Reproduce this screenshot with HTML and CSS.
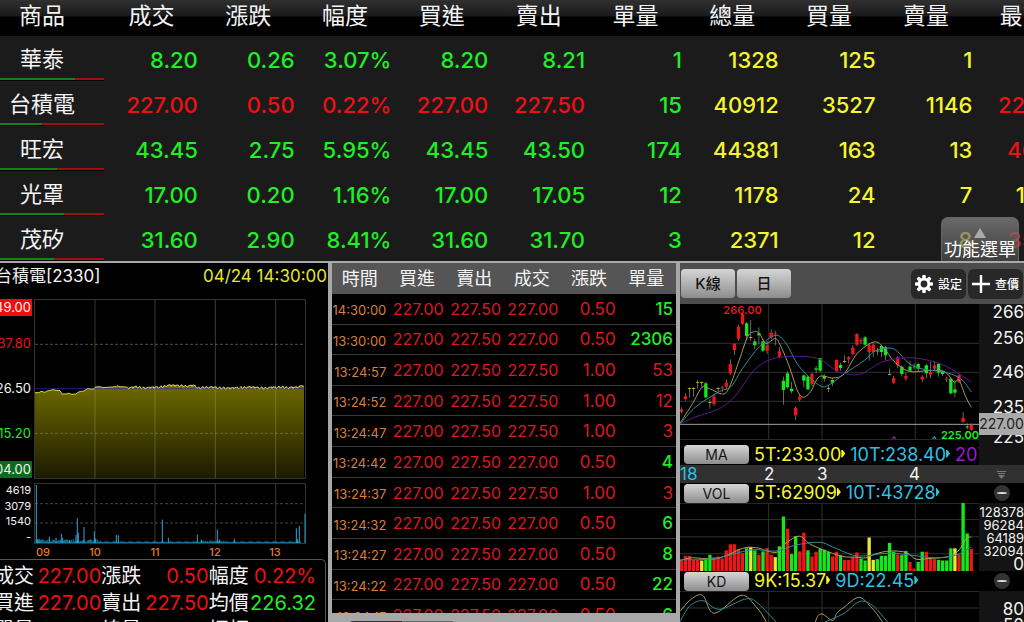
FILE: index.html
```html
<!DOCTYPE html>
<html lang="zh-Hant">
<head>
<meta charset="utf-8">
<meta name="viewport" content="width=device-width, initial-scale=1">
<title>看盤</title>
<link rel="stylesheet" href="styles.css">
</head>
<body>
<section class="quotes">
  <table class="quote-table">
    <colgroup><col class="col-name"><col><col><col><col><col><col><col><col><col><col></colgroup>
    <thead>
      <tr><th class="name">商品</th><th>成交</th><th>漲跌</th><th>幅度</th><th>買進</th><th>賣出</th><th>單量</th><th>總量</th><th>買量</th><th>賣量</th><th>最高</th></tr>
    </thead>
    <tbody>
      <tr class="down"><td class="name">華泰<span class="ratio"><i style="width:72%"></i></span></td><td>8.20</td><td>0.26</td><td>3.07%</td><td>8.20</td><td>8.21</td><td class="g">1</td><td class="y">1328</td><td class="y">125</td><td class="y">1</td><td class="r">8.51</td></tr>
      <tr class="up"><td class="name">台積電<span class="ratio"><i style="width:40%"></i></span></td><td>227.00</td><td>0.50</td><td>0.22%</td><td>227.00</td><td>227.50</td><td class="g">15</td><td class="y">40912</td><td class="y">3527</td><td class="y">1146</td><td class="r">227.50</td></tr>
      <tr class="down"><td class="name">旺宏<span class="ratio"><i style="width:55%"></i></span></td><td>43.45</td><td>2.75</td><td>5.95%</td><td>43.45</td><td>43.50</td><td class="g">174</td><td class="y">44381</td><td class="y">163</td><td class="y">13</td><td class="r">46.80</td></tr>
      <tr class="down"><td class="name">光罩<span class="ratio"><i style="width:62%"></i></span></td><td>17.00</td><td>0.20</td><td>1.16%</td><td>17.00</td><td>17.05</td><td class="g">12</td><td class="y">1178</td><td class="y">24</td><td class="y">7</td><td class="y">17.20</td></tr>
      <tr class="down"><td class="name">茂矽<span class="ratio"><i style="width:52%"></i></span></td><td>31.60</td><td>2.90</td><td>8.41%</td><td>31.60</td><td>31.70</td><td class="g">3</td><td class="y">2371</td><td class="y">12</td><td class="y">8</td><td class="r">35.00</td></tr>
    </tbody>
  </table>
  <button class="menu-tab" type="button">
    <svg width="12" height="10" viewBox="0 0 12 10" aria-hidden="true"><path d="M6 0 12 10H0z" fill="#aaa"/></svg>
    <span>功能選單</span>
  </button>
</section>

<main class="panels">
  <section class="intraday">
    <header class="intraday-head"><h2>台積電[2330]</h2><time>04/24 14:30:00</time></header>
    <div class="intraday-chart">
      <div class="price-axis"><span class="limit-up">249.00</span><span class="r">237.80</span><span>226.50</span><span class="g">215.20</span><span class="limit-down">204.00</span></div>
      <svg class="plot" id="intraday-price" viewBox="102 117 816 540" preserveAspectRatio="none"></svg>
      <div class="volume-axis"><span>4619</span><span>3079</span><span>1540</span><span>-</span></div>
      <svg class="plot" id="intraday-volume" viewBox="102 130 816 183" preserveAspectRatio="none"></svg>
      <div class="hours"><span>09</span><span>10</span><span>11</span><span>12</span><span>13</span></div>
    </div>
    <dl class="details">
      <div><dt>成交</dt><dd class="r">227.00</dd></div>
      <div><dt>漲跌</dt><dd class="r">0.50</dd></div>
      <div><dt>幅度</dt><dd class="r">0.22%</dd></div>
      <div><dt>買進</dt><dd class="r">227.00</dd></div>
      <div><dt>賣出</dt><dd class="r">227.50</dd></div>
      <div><dt>均價</dt><dd class="g">226.32</dd></div>
      <div><dt>單量</dt><dd class="g">15</dd></div>
      <div><dt>總量</dt><dd class="y">40912</dd></div>
      <div><dt>振幅</dt><dd></dd></div>
    </dl>
  </section>

  <section class="ticks">
    <div class="ticks-view">
      <table class="tick-table">
        <thead><tr><th>時間</th><th>買進</th><th>賣出</th><th>成交</th><th>漲跌</th><th>單量</th></tr></thead>
        <tbody>
          <tr><td>14:30:00</td><td>227.00</td><td>227.50</td><td>227.00</td><td>0.50</td><td class="g">15</td></tr>
          <tr><td>13:30:00</td><td>227.00</td><td>227.50</td><td>227.00</td><td>0.50</td><td class="g">2306</td></tr>
          <tr><td>13:24:57</td><td>227.00</td><td>227.50</td><td>227.50</td><td>1.00</td><td>53</td></tr>
          <tr><td>13:24:52</td><td>227.00</td><td>227.50</td><td>227.50</td><td>1.00</td><td>12</td></tr>
          <tr><td>13:24:47</td><td>227.00</td><td>227.50</td><td>227.50</td><td>1.00</td><td>3</td></tr>
          <tr><td>13:24:42</td><td>227.00</td><td>227.50</td><td>227.00</td><td>0.50</td><td class="g">4</td></tr>
          <tr><td>13:24:37</td><td>227.00</td><td>227.50</td><td>227.50</td><td>1.00</td><td>3</td></tr>
          <tr><td>13:24:32</td><td>227.00</td><td>227.50</td><td>227.00</td><td>0.50</td><td class="g">6</td></tr>
          <tr><td>13:24:27</td><td>227.00</td><td>227.50</td><td>227.00</td><td>0.50</td><td class="g">8</td></tr>
          <tr><td>13:24:22</td><td>227.00</td><td>227.50</td><td>227.00</td><td>0.50</td><td class="g">22</td></tr>
          <tr><td>13:24:17</td><td>227.00</td><td>227.50</td><td>227.00</td><td>0.50</td><td class="g">6</td></tr>
        </tbody>
      </table>
    </div>
    <div class="tick-tabs"><i></i><i></i></div>
  </section>

  <section class="kline">
    <header class="toolbar">
      <button class="silver" type="button">K線</button>
      <button class="silver" type="button">日</button>
      <button class="dark push" type="button">
        <svg width="18" height="18" viewBox="-9 -9 18 18" aria-hidden="true"><g fill="#fff"><g id="teeth"><rect x="-1.8" y="-9" width="3.6" height="18" rx="1"/><rect x="-9" y="-1.8" width="18" height="3.6" rx="1"/></g><use href="#teeth" transform="rotate(45)"/><circle r="6.3"/></g><circle r="3.4" fill="#282828"/></svg>
        <span>設定</span>
      </button>
      <button class="dark" type="button">
        <svg width="18" height="18" viewBox="0 0 18 18" aria-hidden="true"><path d="M9 0v18M0 9h18" stroke="#fff" stroke-width="2.4"/></svg>
        <span>查價</span>
      </button>
    </header>

    <div class="pane candle-pane">
      <div class="plot-box">
        <svg class="plot" id="candles" viewBox="12 12 897 408" preserveAspectRatio="none"></svg>
        <span class="high">266.00</span><span class="low">225.00</span>
      </div>
      <div class="axis"><span>266</span><span>256</span><span>246</span><span>235</span><span>225</span><output>227.00</output></div>
    </div>
    <div class="indicator tall">
      <div class="values"><button class="silver pill" type="button">MA</button><span class="y">5T:233.00<i class="flag"></i></span><span class="c">10T:238.40<i class="flag"></i></span><span class="p">20T:243.10</span></div>
      <div class="side"></div>
    </div>
    <div class="months">
      <div class="month-row"><span class="c">18</span><span>2</span><span>3</span><span>4</span></div>
      <div class="side"><svg width="9" height="8" viewBox="0 0 9 8" aria-hidden="true"><path d="M0 .5h9M1 2.5h7" stroke="#777"/><path d="M1 4h7L4.500 8z" fill="#777"/></svg></div>
    </div>
    <div class="indicator">
      <div class="values"><button class="silver pill" type="button">VOL</button><span class="y">5T:62909<i class="flag"></i></span><span class="c">10T:43728<i class="flag"></i></span></div>
      <button class="minus" type="button" aria-label="收合"></button>
    </div>
    <div class="pane volume-pane">
      <svg class="plot" id="volume" viewBox="12 192 897 201" preserveAspectRatio="none"></svg>
      <div class="axis"><span>128378</span><span>96284</span><span>64189</span><span>32094</span><span class="zero">0</span></div>
    </div>
    <div class="indicator">
      <div class="values"><button class="silver pill" type="button">KD</button><span class="y">9K:15.37<i class="flag"></i></span><span class="c">9D:22.45<i class="flag"></i></span></div>
      <button class="minus" type="button" aria-label="收合"></button>
    </div>
    <div class="pane kd-pane">
      <svg class="plot" id="kd" viewBox="12 453 897 240" preserveAspectRatio="none"></svg>
      <div class="axis"><span>80</span><span>50</span><span>20</span></div>
    </div>
  </section>
</main>
<script src="script.js"></script>
</body>
</html>
```

FILE: styles.css
```css
* { box-sizing: border-box; }

body {
  margin: 0;
  height: 100vh;
  display: flex;
  flex-direction: column;
  overflow: hidden;
  background: #000;
  color: #f4f4f4;
  font-family: Inter, "Noto Sans CJK TC", sans-serif;
}

button { font: inherit; border: 0; padding: 0; cursor: pointer; }
table { border-collapse: collapse; table-layout: fixed; }
h2, dl, dd { margin: 0; font-weight: 400; }

.g { color: #1fef25; }
.r { color: #ee1015; }
.y { color: #f5f52e; }
.c { color: #2cc0e4; }
.p { color: #9a18d8; }

/* Quote list */
.quotes { position: relative; overflow: hidden; background: #1b1b1b; flex: none; }
.quote-table { width: 1072px; min-width: 104.7%; }
.col-name { width: 104px; }
.quote-table thead tr {
  height: 36px;
  background: linear-gradient(#303030, #1a1a1a 16px, #000 17px);
}
.quote-table th { padding: 0 2px 5px 0; font-size: 23px; line-height: 30px; font-weight: 400; }
.quote-table td {
  height: 45px;
  padding: 3px 3px 0 0;
  font-size: 22px;
  line-height: 30px;
  font-weight: 500;
  text-align: right;
}
.quote-table .name { padding-right: 20px; text-align: center; font-weight: 400; }
.quote-table td.name { position: relative; padding-bottom: 2px; }
.down { color: #1fef25; }
.up { color: #ee1015; }
td.name { color: #f4f4f4; }
.ratio {
  position: absolute;
  left: 0;
  right: 0;
  bottom: 1px;
  height: 2px;
  background: #a00f10;
  box-shadow: 0 1px #000;
}
.ratio i { display: block; height: 2px; background: #16801a; }
.menu-tab {
  position: absolute;
  right: 5px;
  bottom: 0;
  width: 78px;
  height: 44px;
  display: flex;
  flex-direction: column;
  align-items: center;
  justify-content: flex-end;
  border: 1px solid #666;
  border-bottom: 0;
  border-radius: 7px 7px 0 0;
  background: linear-gradient(rgba(125, 125, 125, .8), rgba(85, 85, 85, .6));
  color: #fff;
  font-size: 18px;
  line-height: 23px;
  white-space: nowrap;
}

/* Lower panels */
.panels {
  flex: 1;
  min-height: 0;
  display: grid;
  grid-template-columns: 328fr 352fr 344fr;
  border-top: 2px solid #a8a8a8;
  overflow: hidden;
}
.panels > * { min-width: 0; min-height: 0; overflow: hidden; }
.plot { display: block; width: 100%; height: 100%; min-height: 0; }

/* Intraday */
.intraday-head {
  display: flex;
  justify-content: space-between;
  height: 36px;
  margin-left: -5px;
  padding-right: 1px;
  font-size: 17px;
  line-height: 26px;
  white-space: nowrap;
}
.intraday-head h2 { font-size: 17px; }
.intraday-head time { color: #e5e52e; }
.intraday-chart {
  display: grid;
  grid-template-columns: 34px 1fr;
  grid-template-rows: 180px 61px 11px;
  row-gap: 4px;
  margin-right: 22px;
}
.price-axis {
  display: grid;
  grid-template-rows: 22px 45px 45px 45px 22px;
  align-items: center;
  justify-content: end;
  font-size: 13px;
  line-height: 17px;
}
.price-axis span { padding: 0 1px 0 4px; margin-right: 2px; text-align: right; }
.price-axis .limit-up { background: #f20d0d; align-self: start; }
.price-axis .limit-down { background: #0e6a1e; align-self: end; }
.volume-axis {
  display: flex;
  flex-direction: column;
  justify-content: space-between;
  padding-right: 3px;
  font-size: 11px;
  line-height: 14px;
  text-align: right;
}
.hours {
  grid-column: 2;
  display: grid;
  grid-template-columns: 31fr 60fr 60fr 60fr 60fr 1fr;
  margin-top: -2px;
  font-size: 11px;
  line-height: 13px;
  font-weight: 500;
  text-align: center;
  color: #e67a2c;
}
.hours span:first-child { text-align: left; padding-left: 2px; }
.details {
  display: grid;
  grid-template-columns: 1fr 1fr 1fr;
  grid-auto-rows: 27px;
  width: 332px;
  min-width: calc(100% + 4px);
  margin-left: -6px;
  padding: 2px 9px 0 0;
  border: solid #555;
  border-width: 1px 1px 0 0;
  border-radius: 0 5px 0 0;
  font-size: 20px;
  line-height: 29px;
}
.details div { display: flex; justify-content: space-between; white-space: nowrap; }

/* Ticks */
.ticks { display: flex; flex-direction: column; padding: 0 4px; background: #a8a8a8; }
.ticks-view { flex: 1; min-height: 0; overflow: hidden; background: #000; }
.tick-table { width: 100%; height: 368px; color: #dc1820; }
.tick-table th {
  height: 31px;
  padding: 0 2px 0 0;
  background: #555;
  color: #f4f4f4;
  font-size: 18px;
  line-height: 26px;
  font-weight: 400;
}
.tick-table td {
  padding: 0 3px 0 0;
  border-bottom: 1px solid #3a3a3a;
  font-size: 16px;
  line-height: 22px;
  text-align: right;
}
.tick-table td:first-child { padding-top: 3px; font-size: 13px; color: #d87f38; }
.tick-table td:nth-child(n+5) { font-size: 17px; }
.tick-table .g { font-weight: 500; }
.tick-tabs { flex: none; display: flex; height: 9px; padding: 8px 0 0 17px; overflow: hidden; }
.tick-tabs i { width: 53px; height: 20px; border-radius: 4px 0 0 4px; background: #333; }
.tick-tabs i + i { border-radius: 0 4px 4px 0; background: #666; }

/* K line */
.toolbar {
  display: flex;
  align-items: center;
  gap: 2px;
  height: 41px;
  padding: 0 1px;
  background: #4d4d4d;
}
.silver {
  width: 54px;
  height: 29px;
  border-radius: 4px;
  background: linear-gradient(#d6d6d6, #8d8d8d);
  color: #151515;
  font-size: 15px;
  line-height: 28px;
  font-weight: 500;
}
.dark {
  display: flex;
  align-items: center;
  justify-content: center;
  gap: 5px;
  width: 55px;
  height: 30px;
  border-radius: 6px;
  background: #282828;
  color: #fff;
  font-size: 12px;
  font-weight: 500;
  white-space: nowrap;
}
.push { margin-left: auto; }
.pane, .indicator, .months { display: grid; grid-template-columns: 1fr 45px; }
.pane { grid-template-rows: minmax(0, 1fr); }
.pane > *, .indicator > * { min-width: 0; }
.axis {
  display: grid;
  background: #141414;
  text-align: right;
}
.candle-pane { height: 136px; }
.plot-box { position: relative; min-height: 0; }
.high, .low { position: absolute; font-size: 11px; line-height: 12px; font-weight: 600; }
.high { left: 14.5%; top: 0; color: #dd1a20; }
.low { right: 0; bottom: -1px; color: #1fef25; }
.candle-pane .axis {
  position: relative;
  grid-template-rows: 16px 35px 34px 35px 25px;
  align-items: center;
  font-size: 17px;
  line-height: 18px;
}
.axis output {
  position: absolute;
  left: 0;
  right: 0;
  top: 109px;
  background: #a9a9a9;
  color: #222;
  font-size: 14px;
  line-height: 22px;
  text-align: center;
}
.indicator { height: 20px; background: #000; }
.indicator.tall { height: 25px; padding-top: 4px; }
.tall .side { margin-top: -4px; }
.side { background: #141414; }
.values {
  display: flex;
  align-items: center;
  gap: 5px;
  overflow: hidden;
  padding-left: 4px;
  font-size: 18px;
  line-height: 20px;
  white-space: nowrap;
}
.pill {
  flex: none;
  width: 65px;
  height: 19px;
  font-size: 14px;
  line-height: 19px;
  font-weight: 400;
}
.flag {
  display: inline-block;
  width: 4px;
  height: 8px;
  margin-bottom: 3px;
  background: currentColor;
  clip-path: polygon(0 0, 1px 0, 4px 50%, 1px 100%, 0 100%);
}
.months { height: 18px; background: #303030; }
.month-row {
  display: grid;
  grid-template-columns: 62fr 53fr 53fr 131fr;
  font-size: 17px;
  line-height: 19px;
}
.month-row span:nth-child(2) { padding-left: 22px; }
.month-row span:nth-child(3) { padding-left: 22px; }
.month-row span:nth-child(4) { padding-left: 61px; }
.months .side { display: flex; align-items: center; justify-content: center; background: none; }
.minus {
  place-self: center;
  width: 16px;
  height: 16px;
  border: 3px solid #333;
  border-width: 7px 3px;
  border-radius: 8px;
  background: #ddd;
}
.volume-pane { height: 68px; }
.volume-pane .axis {
  grid-template-rows: repeat(5, 13px);
  padding-top: 2px;
  font-size: 13px;
  line-height: 14px;
  justify-content: end;
}
.volume-pane .zero { font-size: 17px; }
.kd-pane { height: 80px; }
.kd-pane .axis { grid-template-rows: repeat(3, 16px); padding-top: 9px; font-size: 17px; line-height: 18px; }
```

FILE: script.js
```js
const NS = 'http://www.w3.org/2000/svg';
const COLORS = { r: '#f3141a', g: '#13e81a', y: '#e9e834' };

function add(svg, tag, attrs) {
  const node = document.createElementNS(NS, tag);
  for (const key in attrs) node.setAttribute(key, attrs[key]);
  svg.appendChild(node);
  return node;
}

function line(svg, x1, y1, x2, y2, stroke, dash) {
  add(svg, 'path', {
    d: `M${x1} ${y1}L${x2} ${y2}`, stroke, 'stroke-dasharray': dash || 'none',
    'vector-effect': 'non-scaling-stroke', fill: 'none'
  });
}

function curve(svg, points, stroke) {
  const p = points.split(' ').map(s => s.split(',').map(Number));
  let d = `M${p[0]}`;
  for (let i = 0; i < p.length - 1; i++) {
    const a = p[Math.max(i - 1, 0)], b = p[i], c = p[i + 1], e = p[Math.min(i + 2, p.length - 1)];
    d += `C${b[0] + (c[0] - a[0]) / 6},${b[1] + (c[1] - a[1]) / 6} ${c[0] - (e[0] - b[0]) / 6},${c[1] - (e[1] - b[1]) / 6} ${c}`;
  }
  add(svg, 'path', { d, stroke, fill: 'none', 'vector-effect': 'non-scaling-stroke' });
}

/* Intraday price */
const price = document.getElementById('intraday-price');
price.innerHTML = '<defs><linearGradient id="fill" x1="0" y1="0" x2="0" y2="1"><stop offset="0" stop-color="#6e6a00"/><stop offset="1" stop-color="#1c1b00"/></linearGradient></defs>';
const anchors = [[105, 398], [118, 398], [122, 394], [136, 397], [141, 393], [160, 389], [168, 391], [180, 392], [186, 402], [200, 402], [206, 399], [214, 403], [228, 402], [235, 396], [252, 393], [262, 386], [280, 388], [286, 381], [300, 380], [308, 383], [348, 380], [352, 376], [356, 380], [380, 381], [388, 384], [410, 380], [432, 384], [470, 382], [490, 379], [500, 376], [570, 378], [580, 376], [596, 384], [620, 381], [690, 385], [740, 381], [790, 384], [840, 381], [885, 383], [902, 377], [914, 379]];
let trace = '';
for (let i = 0, x = 105; x <= 914; x += 3) {
  while (i < anchors.length - 2 && anchors[i + 1][0] < x) i++;
  const [ax, ay] = anchors[i], [bx, by] = anchors[i + 1];
  const jitter = x > 380 && x < 895 ? [0, -3, 3, 3, -2][(x * 7 + (x >> 4)) % 5] : 0;
  trace += `${trace ? 'L' : 'M'}${x} ${ay + (by - ay) * (x - ax) / (bx - ax) + jitter}`;
}
add(price, 'path', { d: `${trace}V654H105Z`, fill: 'url(#fill)' });
line(price, 105, 386, 917, 386, 'rgba(40,40,190,.7)');
[253, 520].forEach(y => line(price, 105, y, 917, y, 'rgba(140,140,120,.55)', '3 2'));
[285, 465, 646, 827].forEach(x => line(price, x, 118, x, 656, 'rgba(170,170,130,.35)'));
add(price, 'rect', { x: 103.5, y: 118.5, width: 813, height: 537, fill: 'none', stroke: '#333', 'stroke-width': 3 });
add(price, 'path', { d: trace, fill: 'none', stroke: '#d3d03a', 'vector-effect': 'non-scaling-stroke' });

/* Intraday volume */
const vol = document.getElementById('intraday-volume');
[192, 250].forEach(y => line(vol, 105, y, 917, y, '#444', '3 2'));
[285, 465, 646, 827].forEach(x => line(vol, x, 131, x, 312, '#3a3a3a'));
add(vol, 'rect', { x: 103.5, y: 131.5, width: 813, height: 180, fill: 'none', stroke: '#333', 'stroke-width': 3 });
for (let x = 107; x < 900; x += 3) {
  const busy = x < 300 ? 9 : x > 600 && x < 670 ? 6 : 3;
  const h = 3 + (x * 13 + (x >> 3) * 5) % busy;
  add(vol, 'rect', { x, y: 310 - h, width: 3, height: h, fill: '#1e8fc0' });
}
[[109, 136], [113, 298], [117, 297], [148, 291], [168, 294], [184, 282], [188, 294], [208, 300], [228, 286], [232, 235], [235, 279], [252, 262], [283, 275], [286, 296], [349, 286], [355, 287], [487, 240], [505, 294], [592, 285], [604, 300], [652, 270], [658, 299], [703, 297], [889, 266], [892, 298], [898, 259], [915, 222]]
  .forEach(([x, y]) => add(vol, 'rect', { x: x - 1.5, y, width: 3, height: 310 - y, fill: '#2ba3d6' }));

/* Shared K line grid */
function grid(svg, rows, top, bottom) {
  rows.forEach(y => line(svg, 12, y, 909, y, '#303030'));
  [278, 438, 718].forEach(x => line(svg, x, top, x, bottom, '#303030'));
}

/* side, body top, body bottom, wick top, wick bottom */
const candleData = 'r 328 336 322 340|r 289 297 280 302|y 265 267 262 292|y 265 267 262 290|y 247 249 240 265|y 247 249 244 262|g 250 292 246 296|y 307 309 298 326|r 289 312 280 318|y 265 267 260 280|r 262 265 258 276|r 248 260 238 268|r 192 220 178 224|r 132 150 130 165|r 80 116 74 122|r 42 72 40 74|g 70 108 66 122|y 112 114 60 122|g 124 136 116 148|g 100 106 82 134|g 124 152 118 156|r 136 152 122 162|r 98 112 88 118|r 100 103 92 136|r 154 170 142 172|g 242 270 230 314|g 220 262 214 266|g 266 274 246 280|r 324 346 320 360|r 291 299 284 304|g 226 242 224 262|g 230 268 228 270|r 222 252 218 258|g 205 209 198 220|g 175 212 173 216|g 228 236 222 244|y 265 267 256 276|g 240 248 234 258|r 180 214 178 216|g 195 204 188 212|y 184 186 166 188|r 172 178 168 190|r 143 162 136 166|r 102 134 100 138|r 120 124 114 132|g 112 134 108 138|r 136 156 132 182|r 134 156 130 170|y 152 154 144 166|g 138 156 134 172|g 142 166 138 182|y 222 224 206 226|r 234 248 228 252|r 172 196 168 204|g 200 222 196 230|r 228 236 216 242|g 200 212 182 216|r 200 203 190 208|g 192 206 188 214|r 230 238 226 246|g 196 220 192 234|r 216 224 186 234|r 196 206 184 210|g 192 218 188 230|g 214 222 212 228|r 236 239 230 246|g 236 280 232 284|g 268 278 240 292|r 226 246 222 250|r 354 366 336 368|y 380 382 370 388|r 374 390 370 392';
const STEP = 12.25;
const candles = document.getElementById('candles');
grid(candles, [130, 217, 304, 419], 12, 420);
line(candles, 12, 373, 909, 373, '#a0a0a0');
candleData.split('|').forEach((row, i) => {
  const [side, top, bottom, high, low] = row.split(' ');
  const x = 16 + i * STEP;
  add(candles, 'rect', { x: x - 1, y: high, width: 2, height: low - high, fill: '#999' });
  add(candles, 'rect', { x: x - 5, y: top, width: 10, height: bottom - top, fill: COLORS[side] });
});
curve(candles, '12,370 50,310 78,262 100,266 140,282 160,262 190,180 215,110 235,95 250,100 270,130 298,116 315,140 340,200 371,285 400,280 430,230 470,234 504,222 544,160 594,126 624,144 654,184 699,214 754,212 804,214 834,246 849,240 869,290 886,322', '#a89a58');
curve(candles, '12,372 60,320 130,275 165,260 200,205 250,140 298,106 330,130 370,200 430,256 460,254 504,222 564,182 599,152 639,144 664,154 699,190 744,208 804,216 854,236 886,276', '#348a98');
curve(candles, '12,372 60,350 130,326 180,285 240,205 310,172 420,174 480,212 504,220 554,222 624,184 714,174 804,196 886,246', '#5c1a8e');
add(candles, 'path', { d: 'M649 416l5-5 5 5', fill: 'none', stroke: '#8a22c0', 'stroke-width': 4 });
add(candles, 'path', { d: 'M770 416l5-5 5 5', fill: 'none', stroke: '#2a9ab0', 'stroke-width': 4 });

/* Volume bars: side + top edge */
const volumeData = 'r362 r348 r348 r360 r360 y362 g356 g345 r352 r350 r356 r332 r314 r314 r328 r340 g326 y322 g332 r345 g335 r325 r345 y352 g320 g232 r268 g343 g290 r335 r280 g332 r350 r336 g328 g330 g336 r350 r336 g346 r360 r360 r352 r338 g356 g362 y294 y360 g358 g348 g348 g310 g336 r344 g346 g334 r366 r386 g366 g336 r336 r354 r358 g360 g362 g362 g326 y326 r344 g192 g282 r328'.split(' ');
const bars = document.getElementById('volume');
grid(bars, [193, 241, 292, 342], 192, 393);
volumeData.forEach((item, i) => {
  const y = Number(item.slice(1));
  add(bars, 'rect', { x: 11 + i * STEP, y, width: 10, height: 393 - y, fill: COLORS[item[0]] });
});
curve(bars, '12,362 50,354 110,358 150,348 200,326 240,324 300,338 330,310 370,290 400,312 440,330 500,350 540,352 570,354 600,342 640,334 690,338 720,358 760,356 820,350 850,330 870,298 886,292', '#b0a24e');
curve(bars, '12,360 100,358 160,346 230,330 300,334 360,316 430,308 470,322 530,346 570,348 640,340 720,348 780,354 840,346 886,322', '#2f8c9c');

/* KD */
const kd = document.getElementById('kd');
grid(kd, [454, 504, 580], 453, 693);
curve(kd, '12,514 45,478 80,466 115,520 195,466 240,500 270,545 300,620 400,620 420,540 438,522 470,542 482,520 504,502 548,472 584,500 619,545 660,620', '#a89a58');
curve(kd, '12,545 40,500 80,482 130,508 205,478 240,485 300,545 350,590 420,560 450,545 504,520 553,484 594,500 634,545 690,600', '#348a98');
```
